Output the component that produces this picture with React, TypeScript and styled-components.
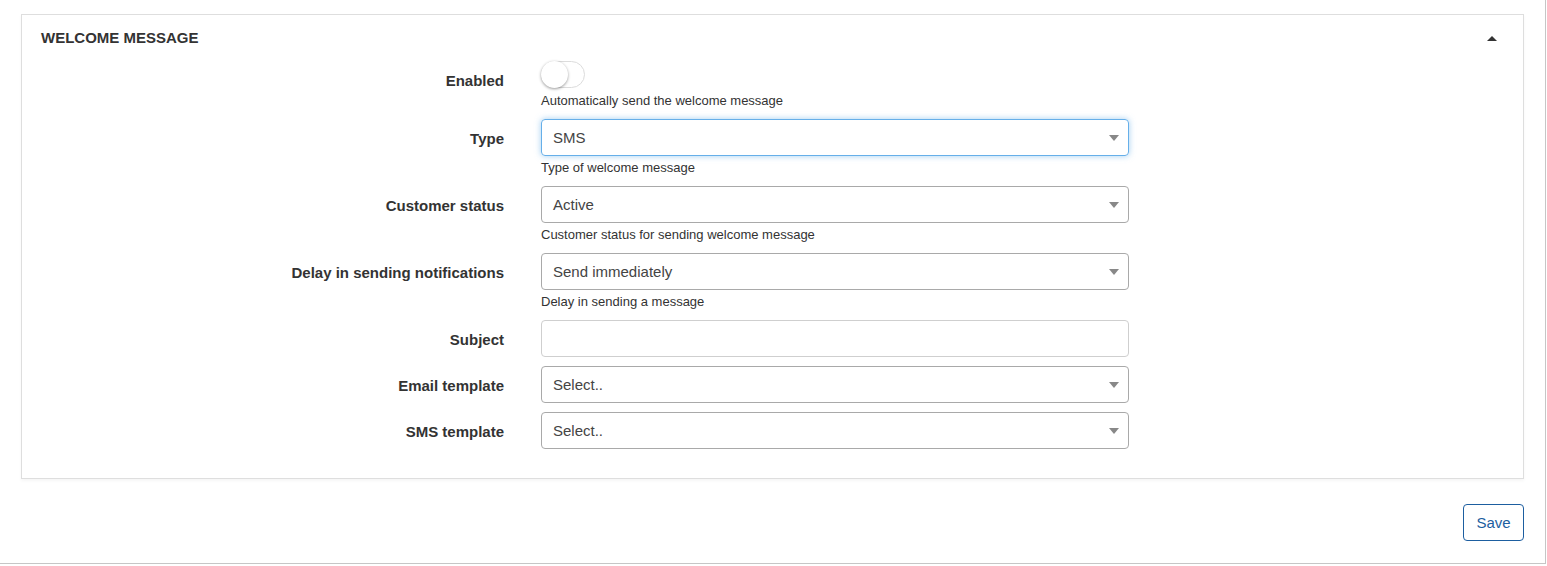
import React from "react";
import styled, { createGlobalStyle } from "styled-components";

const GlobalStyle = createGlobalStyle`
  html, body { margin: 0; padding: 0; background: #fff; }
  body { font-family: "Liberation Sans", Arial, Helvetica, sans-serif; color: #333; }
  * { box-sizing: border-box; }
`;

const Page = styled.div`
  width: 1546px;
  height: 564px;
  border-right: 1px solid #c6c6c6;
  border-bottom: 1px solid #c6c6c6;
  padding: 14px 21px 0 21px;
  display: flex;
  flex-direction: column;
`;

const Card = styled.section`
  border: 1px solid #dedede;
  background: #fff;
  box-shadow: 0 2px 3px rgba(0, 0, 0, 0.04);
  display: flex;
  flex-direction: column;
`;

const CardHeader = styled.header`
  display: flex;
  align-items: flex-start;
  justify-content: space-between;
  padding: 13px 26px 0 19px;
  height: 46px;
`;

const Title = styled.h2`
  margin: 0;
  font-size: 15px;
  line-height: 20px;
  font-weight: 700;
  text-transform: uppercase;
  color: #333;
`;

const Caret = styled.span`
  width: 0;
  height: 0;
  margin-top: 8px;
  border-left: 5px solid transparent;
  border-right: 5px solid transparent;
  border-bottom: 5px solid #333;
`;

const CardBody = styled.div`
  display: flex;
  flex-direction: column;
  padding: 0 0 29px 0;
`;

const Row = styled.div`
  display: flex;
  align-items: flex-start;
  margin-bottom: 9px;
  &:last-child { margin-bottom: 0; }
`;

const Label = styled.label`
  width: 482px;
  margin-right: 37px;
  text-align: right;
  font-size: 15px;
  font-weight: 700;
  line-height: 21px;
  padding-top: 9px;
  color: #333;
`;

const Field = styled.div`
  width: 588px;
  display: flex;
  flex-direction: column;
`;

const Help = styled.div`
  margin-top: 3px;
  font-size: 13px;
  line-height: 18px;
  color: #333;
`;

const SwitchWrap = styled.div`
  height: 28px;
`;

const Track = styled.span<{ $on?: boolean }>`
  position: relative;
  display: block;
  width: 44px;
  height: 27px;
  border-radius: 14px;
  border: 1px solid #dcdcdc;
  background: ${(p) => (p.$on ? "#2f6fb0" : "#fff")};
`;

const Knob = styled.span`
  position: absolute;
  left: -1px;
  top: -1px;
  width: 27px;
  height: 27px;
  border-radius: 50%;
  background: #fff;
  box-shadow: 0 1px 3px rgba(0, 0, 0, 0.4);
`;

const SelectBox = styled.div<{ $focus?: boolean }>`
  height: 37px;
  border: 1px solid ${(p) => (p.$focus ? "#66afe9" : "#a9a9a9")};
  border-radius: 4px;
  box-shadow: ${(p) => (p.$focus ? "0 0 6px rgba(102, 175, 233, 0.6)" : "none")};
  display: flex;
  align-items: center;
  justify-content: space-between;
  padding: 0 9px 0 11px;
  font-size: 15px;
  color: #444;
`;

const Arrow = styled.span`
  width: 0;
  height: 0;
  border-left: 5px solid transparent;
  border-right: 5px solid transparent;
  border-top: 6px solid #888;
  margin-top: 1px;
`;

const TextInput = styled.input`
  height: 37px;
  border: 1px solid #cfcfcf;
  border-radius: 4px;
  padding: 0 11px;
  font-family: inherit;
  font-size: 15px;
  color: #444;
  outline: none;
`;

const Footer = styled.div`
  display: flex;
  justify-content: flex-end;
  margin-top: 25px;
`;

const SaveButton = styled.button`
  width: 61px;
  height: 37px;
  border: 1px solid #1d5ea0;
  border-radius: 4px;
  background: #fff;
  color: #1d5ea0;
  font-family: inherit;
  font-size: 15px;
  padding: 0;
  cursor: pointer;
`;

const Select: React.FC<{ value: string; focus?: boolean }> = ({ value, focus }) => (
  <SelectBox $focus={focus}>
    <span>{value}</span>
    <Arrow />
  </SelectBox>
);

export default function App() {
  return (
    <>
      <GlobalStyle />
      <Page>
        <Card>
          <CardHeader>
            <Title>Welcome message</Title>
            <Caret />
          </CardHeader>
          <CardBody>
            <Row>
              <Label>Enabled</Label>
              <Field>
                <SwitchWrap>
                  <Track>
                    <Knob />
                  </Track>
                </SwitchWrap>
                <Help>Automatically send the welcome message</Help>
              </Field>
            </Row>
            <Row>
              <Label>Type</Label>
              <Field>
                <Select value="SMS" focus />
                <Help>Type of welcome message</Help>
              </Field>
            </Row>
            <Row>
              <Label>Customer status</Label>
              <Field>
                <Select value="Active" />
                <Help>Customer status for sending welcome message</Help>
              </Field>
            </Row>
            <Row>
              <Label>Delay in sending notifications</Label>
              <Field>
                <Select value="Send immediately" />
                <Help>Delay in sending a message</Help>
              </Field>
            </Row>
            <Row>
              <Label>Subject</Label>
              <Field>
                <TextInput type="text" />
              </Field>
            </Row>
            <Row>
              <Label>Email template</Label>
              <Field>
                <Select value="Select.." />
              </Field>
            </Row>
            <Row>
              <Label>SMS template</Label>
              <Field>
                <Select value="Select.." />
              </Field>
            </Row>
          </CardBody>
        </Card>
        <Footer>
          <SaveButton>Save</SaveButton>
        </Footer>
      </Page>
    </>
  );
}
